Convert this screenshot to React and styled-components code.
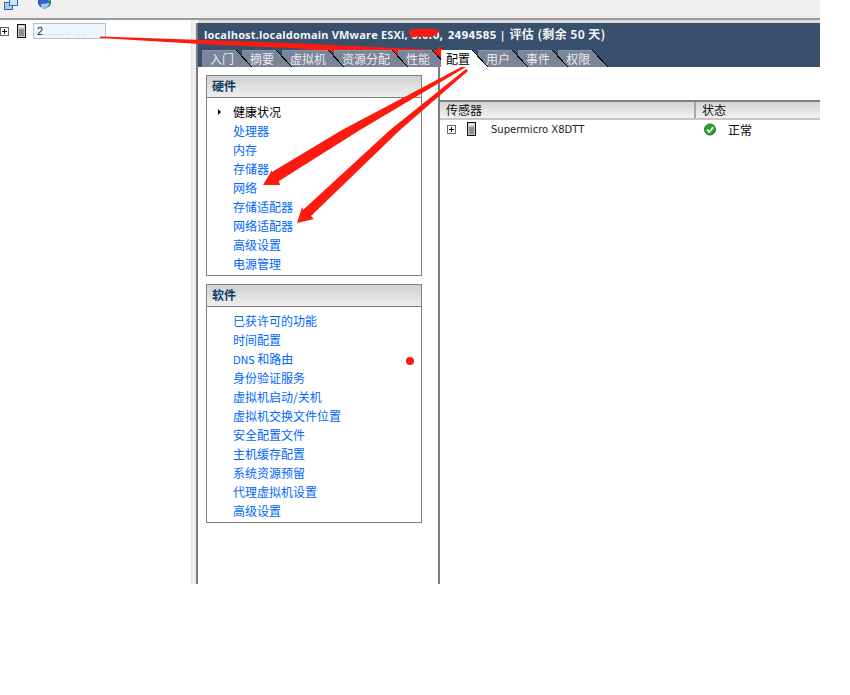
import React from 'react';
import styled, { createGlobalStyle } from 'styled-components';

const GlobalStyle = createGlobalStyle`
  html, body {
    margin: 0;
    background: #fff;
    font-family: "Liberation Sans", "Noto Sans CJK SC", sans-serif;
  }
`;

const CJK = '"Noto Sans CJK SC", sans-serif';

const Page = styled.div`
  position: relative;
  width: 820px;
  height: 584px;
  overflow: hidden;
  background: #fff;
  display: flex;
  flex-direction: column;
`;

const Toolbar = styled.div`
  height: 18px;
  flex: none;
  display: flex;
  align-items: flex-start;
  gap: 20px;
  padding-left: 4px;
  background: #f0f0f0;
  border-bottom: 2px solid #9a9a9a;
`;

const Main = styled.div`
  flex: 1;
  display: flex;
  min-height: 0;
  padding-top: 3px;
`;

const TreePane = styled.div`
  width: 191px;
  flex: none;
`;

const TreeRow = styled.div`
  height: 16px;
  display: flex;
  align-items: center;
`;

const Expander = styled.span`
  box-sizing: border-box;
  position: relative;
  width: 9px;
  height: 9px;
  flex: none;
  border: 1px solid #666;
  background: #fff;
  margin-left: ${p => p.$left || 0}px;

  &::before {
    content: '';
    position: absolute;
    left: 1px;
    top: 3px;
    width: 5px;
    height: 1px;
    background: #000;
  }

  &::after {
    content: '';
    position: absolute;
    left: 3px;
    top: 1px;
    width: 1px;
    height: 5px;
    background: #000;
  }
`;

const ServerSvg = styled.svg`
  flex: none;
  margin-left: ${p => p.$left}px;
`;

const TreeLabel = styled.div`
  box-sizing: border-box;
  width: 73px;
  height: 16px;
  margin-left: 7px;
  padding-left: 3px;
  border: 1px solid #a8c4de;
  background: #eef5fb;
  font-size: 11px;
  line-height: 14px;
  color: #222;
  white-space: pre;
  overflow: hidden;

  span {
    color: #c4ccd4;
  }
`;

const Splitter = styled.div`
  width: 5px;
  flex: none;
  margin-top: -3px;
  background: linear-gradient(to right, #e2e2e2, #f4f4f4 60%, #e6e6e6);
`;

const Content = styled.div`
  flex: 1;
  min-width: 0;
  display: flex;
  flex-direction: column;
  border-left: 2px solid #7c7c7c;
`;

const Banner = styled.div`
  height: 44px;
  flex: none;
  background: #38506b;
  display: flex;
  flex-direction: column;
  box-shadow: 0 -3px 0 #dcdcdc;
`;

const Title = styled.div`
  height: 27px;
  padding-left: 6px;
  font: bold 11px/21px "Open Sans", ${CJK};
  letter-spacing: 0.18px;
  color: #f2f5f8;
  white-space: pre;
`;

const TitleBuild = styled.span`
  font: bold 10px/21px "DejaVu Sans", sans-serif;
  letter-spacing: 0;
  word-spacing: 1px;
`;

const TitleLicense = styled.span`
  margin-left: 5px;
  font: bold 12px/21px ${CJK};
  letter-spacing: 0.4px;
`;

const Tabs = styled.div`
  display: flex;
  padding-left: 4px;
  gap: 6px;
  height: 17px;
`;

const Tab = styled.div`
  position: relative;
  height: 17px;
  padding: 0 2px 0 ${p => (p.$active ? 5 : 8)}px;
  margin-left: ${p => (p.$active ? 3 : 0)}px;
  font: 12px/18px ${CJK};
  color: ${p => (p.$active ? '#000' : '#e9ebef')};
  background: ${p => (p.$active ? '#fff' : '#7b8599')};
  box-shadow: ${p => (p.$active ? 'none' : 'inset 0 1px 0 #8d96a8')};

  &::after {
    content: '';
    position: absolute;
    top: 0;
    left: 100%;
    width: 16px;
    height: 17px;
    background: linear-gradient(
      to top right,
      ${p => (p.$active ? '#fff' : '#7b8599')} 48%,
      #000 48%,
      #000 52%,
      transparent 52%
    );
  }
`;

const Body = styled.div`
  flex: 1;
  min-height: 0;
  display: flex;
`;

const LinksColumn = styled.div`
  box-sizing: border-box;
  width: 242px;
  flex: none;
  padding: 8px 0 0 8px;
  display: flex;
  flex-direction: column;
  gap: 8px;
  border-right: 2px solid #7c7c7c;
`;

const Panel = styled.section`
  box-sizing: border-box;
  width: 216px;
  border: 1px solid #808080;
  background: #fff;
`;

const PanelHead = styled.h3`
  margin: 0;
  height: 21px;
  padding-left: 5px;
  border-bottom: 1px solid #808080;
  background: linear-gradient(to bottom, #cfd1d1, #eeeeee);
  font: bold 12px/20px ${CJK};
  color: #0d3c66;
`;

const LinkList = styled.ul`
  list-style: none;
  margin: 0;
  padding: 4px 0 2px 26px;
`;

const LinkItem = styled.li`
  position: relative;
  height: 19px;
  font: 12px/19px ${CJK};
  color: ${p => (p.$current ? '#000' : '#0066ff')};

  small {
    font-family: "DejaVu Sans", sans-serif;
    font-size: 10px;
  }
`;

const Marker = styled.span`
  position: absolute;
  left: -15px;
  top: 7px;
  border-left: 3px solid #000;
  border-top: 3px solid transparent;
  border-bottom: 3px solid transparent;
`;

const Sensors = styled.div`
  flex: 1;
  min-width: 0;
  padding-top: 33px;
`;

const SensorHead = styled.div`
  height: 16px;
  display: flex;
  border-top: 2px solid #808080;
  border-bottom: 2px solid #c6c6c6;
  background: linear-gradient(to bottom, #d4d4d4, #f2f2f2);
  font: 12px/15px ${CJK};
  color: #111;
`;

const HeadCell = styled.div`
  box-sizing: border-box;
  width: ${p => p.$width}px;
  padding-left: 6px;
  flex: none;
  border-right: ${p => (p.$last ? 'none' : '2px solid #a8a8a8')};
`;

const SensorRow = styled.div`
  height: 20px;
  margin-top: -1px;
  display: flex;
  align-items: center;
`;

const SensorName = styled.span`
  width: 213px;
  margin-left: 15px;
  flex: none;
  font: 10px "DejaVu Sans", sans-serif;
  color: #222;
`;

const StatusText = styled.span`
  margin-left: 12px;
  font: 12px ${CJK};
  color: #000;
`;

const Overlay = styled.svg`
  position: absolute;
  inset: 0;
  pointer-events: none;
`;

const ServerIcon = ({ left }) => (
  <ServerSvg $left={left} width="9" height="14" viewBox="0 0 9 14">
    <rect x="0.5" y="0.5" width="8" height="13" fill="#c8c8c8" stroke="#111" />
    <rect x="2" y="2" width="5" height="1" fill="#fff" />
    <rect x="2" y="5" width="5" height="7" fill="#8f8f8f" />
  </ServerSvg>
);

const hardware = ['处理器', '内存', '存储器', '网络', '存储适配器', '网络适配器', '高级设置', '电源管理'];
const software = [
  '已获许可的功能',
  '时间配置',
  'DNS',
  '身份验证服务',
  '虚拟机启动/关机',
  '虚拟机交换文件位置',
  '安全配置文件',
  '主机缓存配置',
  '系统资源预留',
  '代理虚拟机设置',
  '高级设置',
];
const tabs = ['入门', '摘要', '虚拟机', '资源分配', '性能', '配置', '用户', '事件', '权限'];

export default function App() {
  return (
    <Page>
      <GlobalStyle />
      <Toolbar>
        <svg width="14" height="10" viewBox="0 0 14 10">
          <rect x="0.5" y="2.5" width="8" height="7" fill="#a8c8ec" stroke="#2d6db5" />
          <rect x="5.5" y="-2.5" width="8" height="8" fill="#cfe2f7" stroke="#2d6db5" />
        </svg>
        <svg width="14" height="10" viewBox="0 0 14 10">
          <circle cx="6.5" cy="2" r="6" fill="#2f66c4" stroke="#1c3f86" />
          <path d="M3 4 L12 3 L9 8 L3 8 Z" fill="#9cc7ee" />
          <rect x="10" y="0" width="3" height="2" fill="#3aa84a" />
        </svg>
      </Toolbar>
      <Main>
        <TreePane>
          <TreeRow>
            <Expander />
            <ServerIcon left={8} />
            <TreeLabel>2<span>.........  . .</span></TreeLabel>
          </TreeRow>
        </TreePane>
        <Splitter />
        <Content>
          <Banner>
            <Title>
              localhost.localdomain VMware ESXi, <TitleBuild>6.0.0, 2494585 |</TitleBuild>
              <TitleLicense>评估 (剩余 50 天)</TitleLicense>
            </Title>
            <Tabs>
              {tabs.map((tab, i) => (
                <Tab key={tab} $active={tab === '配置'} style={{ zIndex: tab === '配置' ? 20 : 10 - i }}>
                  {tab}
                </Tab>
              ))}
            </Tabs>
          </Banner>
          <Body>
            <LinksColumn>
              <Panel>
                <PanelHead>硬件</PanelHead>
                <LinkList>
                  <LinkItem $current>
                    <Marker />
                    健康状况
                  </LinkItem>
                  {hardware.map(item => (
                    <LinkItem key={item}>{item}</LinkItem>
                  ))}
                </LinkList>
              </Panel>
              <Panel>
                <PanelHead>软件</PanelHead>
                <LinkList>
                  {software.map(item =>
                    item === 'DNS' ? (
                      <LinkItem key={item}>
                        <small>DNS</small> 和路由
                      </LinkItem>
                    ) : (
                      <LinkItem key={item}>{item}</LinkItem>
                    )
                  )}
                </LinkList>
              </Panel>
            </LinksColumn>
            <Sensors>
              <SensorHead>
                <HeadCell $width={256}>传感器</HeadCell>
                <HeadCell $last $width={124}>状态</HeadCell>
              </SensorHead>
              <SensorRow>
                <Expander $left={7} />
                <ServerIcon left={11} />
                <SensorName>Supermicro X8DTT</SensorName>
                <svg width="12" height="13" viewBox="0 0 12 13">
                  <circle cx="6" cy="6.5" r="5.5" fill="#2ea02e" stroke="#1d7a1d" />
                  <path d="M3 6.5 L5.3 9 L9.3 4.2" fill="none" stroke="#fff" strokeWidth="1.8" />
                </svg>
                <StatusText>正常</StatusText>
              </SensorRow>
            </Sensors>
          </Body>
        </Content>
      </Main>
      <Overlay width="820" height="584" viewBox="0 0 820 584">
        <g fill="#ff1a10">
          <path d="M100 36.5 L290 43 L438 50 L438 47 L452 53 L438 63 L437 60 L290 48 L200 44 L100 38 Z" />
          <path d="M465 65 L342 130 L272 172 L272 170 L263 185 L280 185 L279 181 L360 130 L466 67 Z" />
          <path d="M466 69 L390 130 L303 210 L302 207 L297 223 L314 219 L311 216 L400 130 L468 71 Z" />
          <path d="M410 30 Q425 27 438 30 Q440 35 430 37 Q418 36 411 37 Q408 33 410 30 Z" />
          <circle cx="410" cy="361" r="4" />
        </g>
      </Overlay>
    </Page>
  );
}
